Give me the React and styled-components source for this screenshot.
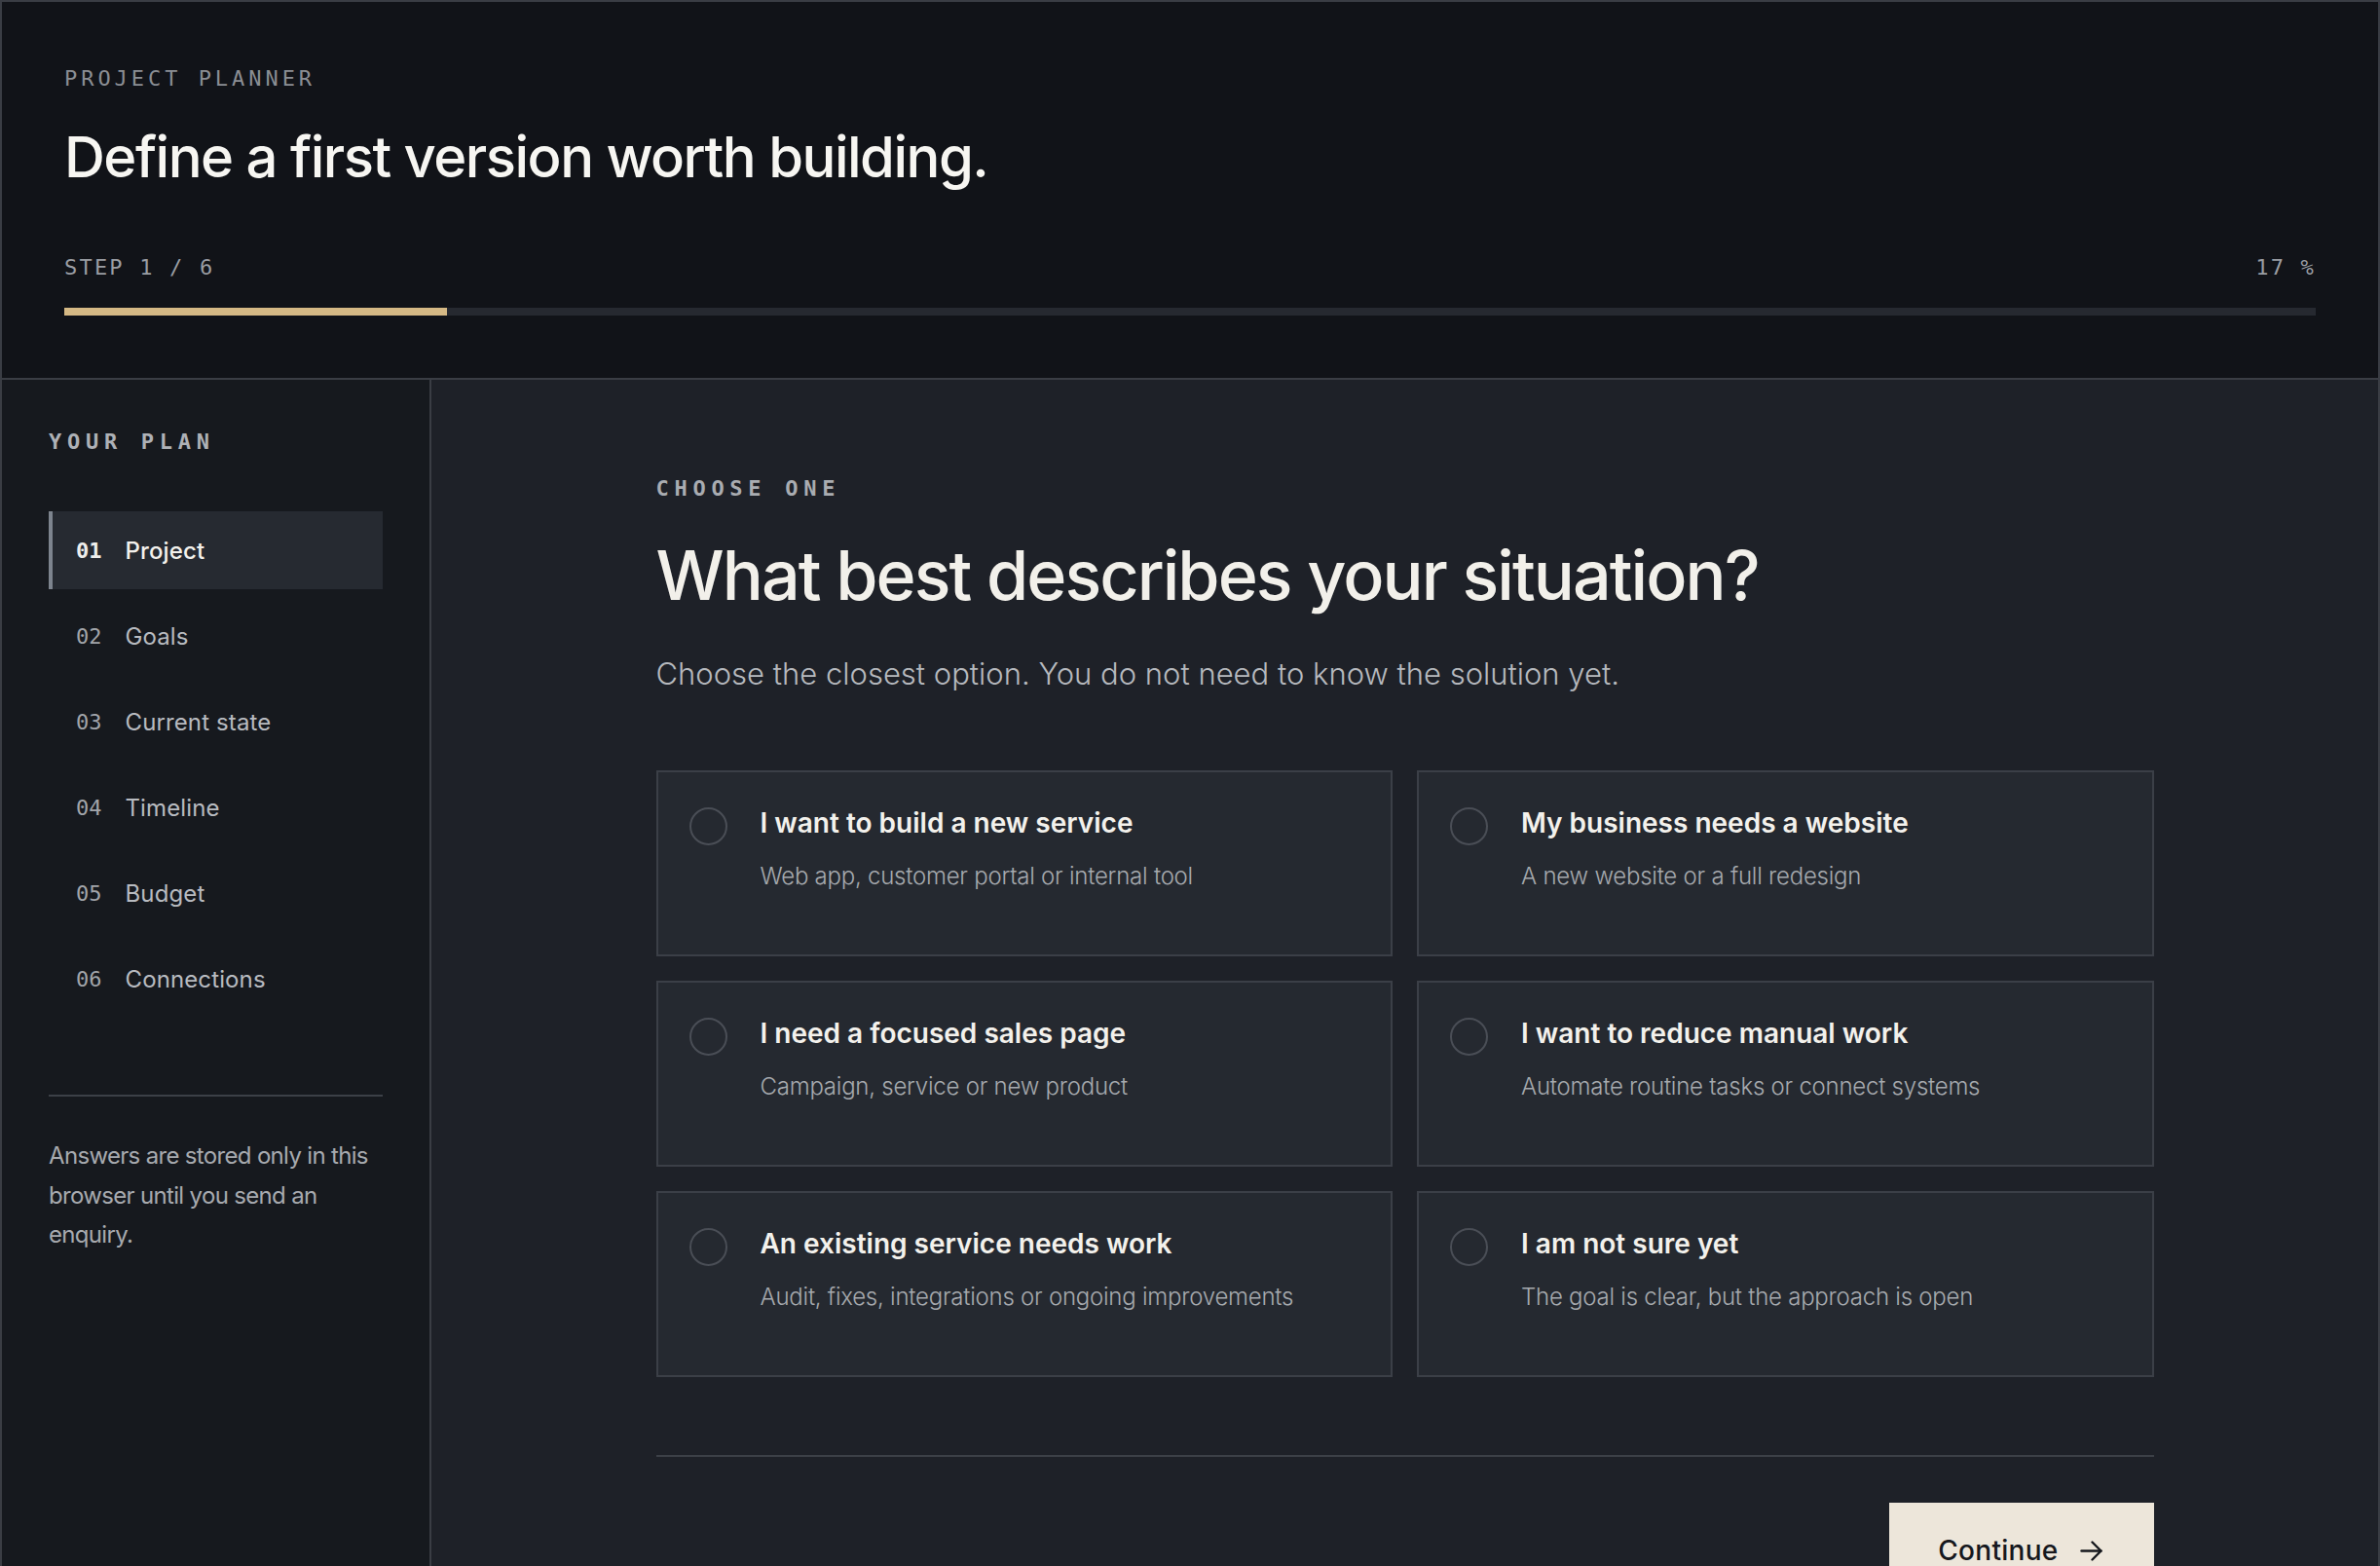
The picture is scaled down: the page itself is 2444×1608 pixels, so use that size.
import React from "react";
import styled, { createGlobalStyle } from "styled-components";

const GlobalStyle = createGlobalStyle`
  html, body { margin: 0; padding: 0; background: #1e2128; }
  * { box-sizing: border-box; }
  body { font-family: "Inter", "Noto Sans", sans-serif; -webkit-font-smoothing: antialiased; }
`;

const MONO = `"DejaVu Sans Mono", "Liberation Mono", monospace`;
const SANS = `"Inter", "Noto Sans", sans-serif`;

const Frame = styled.div`
  min-height: 100vh;
  border: 2px solid #3a3d44;
  display: flex;
  flex-direction: column;
  background: #1e2128;
`;

const Header = styled.header`
  background: #111318;
  padding: 64px 64px 64px;
  border-bottom: 2px solid #3a3d44;
`;

const Eyebrow = styled.div`
  font-family: ${MONO};
  font-size: 22px;
  line-height: 30px;
  letter-spacing: 0.18em;
  color: #8b8e94;
  text-transform: uppercase;
`;

const Title = styled.h1`
  margin: 30px 0 0;
  font-family: ${SANS};
  font-weight: 500;
  font-size: 58px;
  line-height: 70px;
  letter-spacing: -0.026em;
  color: #f7f6f2;
`;

const StepRow = styled.div`
  margin-top: 64px;
  display: flex;
  justify-content: space-between;
  font-family: ${MONO};
  font-size: 22px;
  line-height: 30px;
  letter-spacing: 0.1em;
  color: #9a9da3;
`;

const Track = styled.div`
  margin-top: 26px;
  height: 8px;
  background: #262930;
`;

const Fill = styled.div`
  height: 100%;
  background: #d5b985;
`;

const Body = styled.div`
  flex: 1;
  display: grid;
  grid-template-columns: 441px 1fr;
`;

const Sidebar = styled.aside`
  background: #16191e;
  border-right: 2px solid #3a3d44;
  padding: 49px 48px 48px;
`;

const SectionLabel = styled.div`
  font-family: ${MONO};
  font-weight: 700;
  font-size: 22px;
  line-height: 30px;
  letter-spacing: 0.26em;
  color: ${(p) => p.$color || "#aeb1b6"};
  text-transform: uppercase;
`;

const NavList = styled.nav`
  margin-top: 56px;
  display: flex;
  flex-direction: column;
  gap: 8px;
`;

const NavItem = styled.div`
  height: 80px;
  display: flex;
  align-items: center;
  gap: 24px;
  padding-left: 24px;
  border-left: 4px solid ${(p) => (p.$active ? "#7d848e" : "transparent")};
  background: ${(p) => (p.$active ? "#262a31" : "transparent")};
`;

const NavNum = styled.span`
  font-family: ${MONO};
  font-size: 22px;
  font-weight: ${(p) => (p.$active ? 700 : 400)};
  color: ${(p) => (p.$active ? "#eeeeec" : "#a2a5aa")};
`;

const NavLabel = styled.span`
  font-family: ${SANS};
  font-size: 24px;
  font-weight: ${(p) => (p.$active ? 500 : 400)};
  letter-spacing: 0.005em;
  color: ${(p) => (p.$active ? "#f3f1ec" : "#b8bbc0")};
`;

const Divider = styled.hr`
  margin: ${(p) => p.$margin || "0"};
  border: none;
  height: 2px;
  background: #3c4047;
`;

const Note = styled.p`
  margin: 41px 0 0;
  font-family: ${SANS};
  font-size: 24px;
  line-height: 40.5px;
  letter-spacing: -0.028em;
  color: #a7aaaf;
`;

const Main = styled.main`
  padding: 97px 0 0;
`;

const Content = styled.div`
  max-width: 1538px;
  margin: 0 auto;
`;

const Heading = styled.h2`
  margin: 35px 0 0;
  font-family: ${SANS};
  font-weight: 500;
  font-size: 70px;
  line-height: 77px;
  letter-spacing: -0.028em;
  color: #f2f0ea;
`;

const Lead = styled.p`
  margin: 40px 0 0;
  font-family: ${SANS};
  font-weight: 300;
  font-size: 31px;
  line-height: 45px;
  letter-spacing: 0;
  color: #b6b9be;
`;

const Grid = styled.div`
  margin-top: 77px;
  display: grid;
  grid-template-columns: 1fr 1fr;
  gap: 25px 25px;
`;

const Card = styled.button`
  min-height: 191px;
  display: flex;
  align-items: flex-start;
  gap: 34px;
  padding: 34px 32px;
  text-align: left;
  background: #252930;
  border: 2px solid #3b3f47;
  cursor: pointer;
  font: inherit;
`;

const Radio = styled.span`
  flex: none;
  width: 39px;
  height: 39px;
  margin-top: 2px;
  border-radius: 50%;
  border: 2px solid #4a4e56;
`;

const CardText = styled.span`
  display: flex;
  flex-direction: column;
  gap: 19px;
`;

const CardTitle = styled.span`
  font-family: ${SANS};
  font-weight: 600;
  font-size: 28px;
  line-height: 36px;
  letter-spacing: 0;
  color: #f3f1ec;
`;

const CardDesc = styled.span`
  font-family: ${SANS};
  font-weight: 300;
  font-size: 24px;
  line-height: 36px;
  letter-spacing: -0.01em;
  color: #a6a9ae;
`;

const Footer = styled.div`
  display: flex;
  justify-content: flex-end;
  padding-top: 47px;
`;

const PrimaryButton = styled.button`
  display: flex;
  align-items: center;
  gap: 22px;
  padding: 31px 53px 31px 50px;
  background: #ede6da;
  border: none;
  font-family: ${SANS};
  font-weight: 500;
  font-size: 28px;
  line-height: 36px;
  letter-spacing: 0.01em;
  color: #16181d;
  cursor: pointer;
`;

const steps = ["Project", "Goals", "Current state", "Timeline", "Budget", "Connections"];

const options = [
  ["I want to build a new service", "Web app, customer portal or internal tool"],
  ["My business needs a website", "A new website or a full redesign"],
  ["I need a focused sales page", "Campaign, service or new product"],
  ["I want to reduce manual work", "Automate routine tasks or connect systems"],
  ["An existing service needs work", "Audit, fixes, integrations or ongoing improvements"],
  ["I am not sure yet", "The goal is clear, but the approach is open"],
];

const Arrow = () => (
  <svg width="23" height="21" viewBox="0 0 23 21" fill="none" stroke="#16181d" strokeWidth="2.4" strokeLinecap="round" strokeLinejoin="round">
    <path d="M1.5 10.5H21.5" />
    <path d="M12.5 1.5L21.5 10.5L12.5 19.5" />
  </svg>
);

export default function App() {
  const progress = 17;
  return (
    <>
      <GlobalStyle />
      <Frame>
        <Header>
          <Eyebrow>Project Planner</Eyebrow>
          <Title>Define a first version worth building.</Title>
          <StepRow>
            <span>STEP 1 / 6</span>
            <span>17 %</span>
          </StepRow>
          <Track>
            <Fill style={{ width: `${progress}%` }} />
          </Track>
        </Header>
        <Body>
          <Sidebar>
            <SectionLabel>Your plan</SectionLabel>
            <NavList>
              {steps.map((s, i) => (
                <NavItem key={s} $active={i === 0}>
                  <NavNum $active={i === 0}>{String(i + 1).padStart(2, "0")}</NavNum>
                  <NavLabel $active={i === 0}>{s}</NavLabel>
                </NavItem>
              ))}
            </NavList>
            <Divider $margin="79px 0 0" />
            <Note>Answers are stored only in this browser until you send an enquiry.</Note>
          </Sidebar>
          <Main>
            <Content>
              <SectionLabel $color="#a9acb1">Choose one</SectionLabel>
              <Heading>What best describes your situation?</Heading>
              <Lead>Choose the closest option. You do not need to know the solution yet.</Lead>
              <Grid>
                {options.map(([t, d]) => (
                  <Card key={t} type="button">
                    <Radio />
                    <CardText>
                      <CardTitle>{t}</CardTitle>
                      <CardDesc>{d}</CardDesc>
                    </CardText>
                  </Card>
                ))}
              </Grid>
              <Divider $margin="80px 0 0" />
              <Footer>
                <PrimaryButton type="button">
                  Continue
                  <Arrow />
                </PrimaryButton>
              </Footer>
            </Content>
          </Main>
        </Body>
      </Frame>
    </>
  );
}
